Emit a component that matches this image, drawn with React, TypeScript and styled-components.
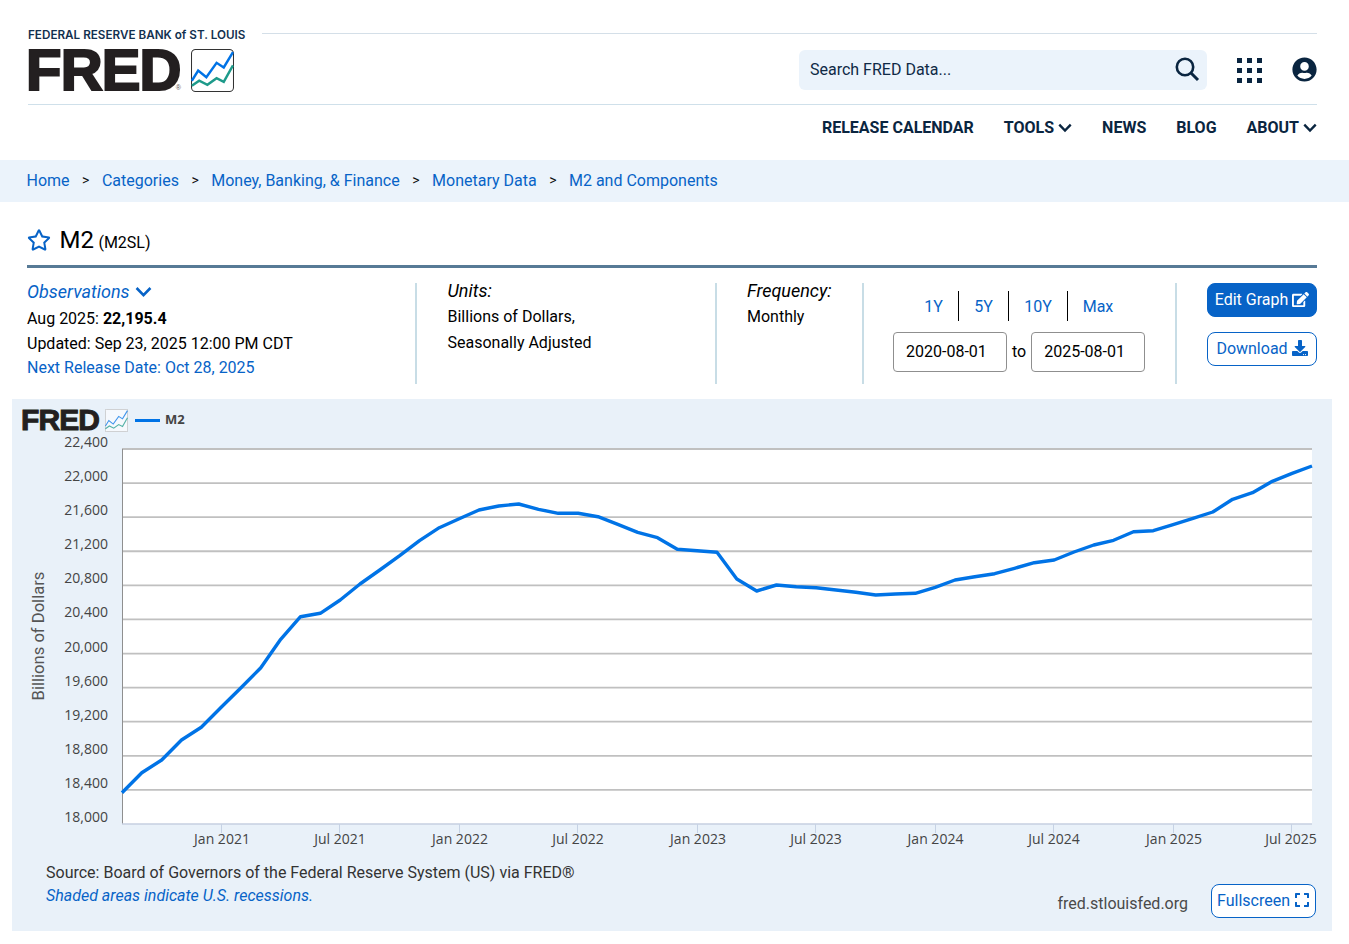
import React from "react";
import styled, { createGlobalStyle } from "styled-components";
import { FaEdit, FaDownload, FaExpand, FaRegStar, FaUserCircle } from "react-icons/fa";

const Global = createGlobalStyle`
  html, body { margin: 0; padding: 0; background: #fff; }
  body { font-family: Roboto, "Liberation Sans", sans-serif; font-size: 16px; color: #000; }
  * { box-sizing: border-box; }
`;

const Page = styled.div`width: 1349px; height: 944px; overflow: hidden;`;
const Header = styled.header`padding: 27px 32px 0 27px; height: 160px;`;
const TopRow = styled.div`display: flex; height: 78px; border-bottom: 1px solid #cfe0ea; margin-left: 1px;`;
const Brand = styled.div`width: 234px; flex: none;`;
const BankName = styled.div`font-family: Inter, Lato, sans-serif; font-size: 11.7px; font-weight: 600; color: #12304f; line-height: 14px; white-space: nowrap; padding-top: 1px; margin-bottom: 7px;`;
const LogoRow = styled.div`display: flex; align-items: flex-start; gap: 10px;`;
const LogoWord = styled.div`font-family: "Liberation Sans", sans-serif; font-weight: 700; color: #231f20; font-size: 58px; line-height: 42px; height: 42px; letter-spacing: -0.8px; -webkit-text-stroke: 2.2px #231f20; position: relative; width: 153px; white-space: nowrap; text-indent: -2px;`;
const Reg = styled.span`position: absolute; right: 0; bottom: 0; font-size: 7px; line-height: 7px; letter-spacing: 0; color: #555; -webkit-text-stroke: 0; font-weight: 400; text-indent: 0;`;
const TopRight = styled.div`flex: 1; display: flex; flex-direction: column;`;
const Rule = styled.div`height: 1px; background: #d4dfe8; margin-top: 6px;`;
const Tools = styled.div`display: flex; align-items: center; margin-top: 16px; justify-content: flex-end;`;
const Search = styled.div`width: 408px; height: 40px; background: #ebf3fb; border-radius: 6px; display: flex; align-items: center; justify-content: space-between; padding: 0 7px 2px 11px; font-size: 16px; color: #0f2a46;`;
const Grid3 = styled.svg`margin-left: 29px; display: block;`;
const Person = styled(FaUserCircle)`margin-left: 30px; display: block; margin-bottom: 2px; color: #0a2540; flex: none;`;
const Nav = styled.nav`display: flex; justify-content: flex-end; gap: 30px; margin-top: 13px; height: 20px;`;
const NavLink = styled.span`display: flex; align-items: center; gap: 4px; font-weight: 700; font-size: 16px; line-height: 20px; color: #0a2540; white-space: nowrap;`;
const Crumbs = styled.div`height: 42px; background: #ebf3fb; display: flex; align-items: center; padding: 0 0 2px 26.5px; font-size: 16px;`;
const Crumb = styled.a`color: #0763c7;`;
const Sep = styled.span`color: #111; margin: 0 12.5px; font-size: 14px;`;
const Main = styled.main`padding: 0 32px 0 27px;`;
const TitleRow = styled.div`display: flex; align-items: center; height: 66px; border-bottom: 3px solid #577a96; padding-top: 15px;`;
const Star = styled(FaRegStar)`color: #0763c7; margin-top: -2px; flex: none;`;
const Title = styled.h1`margin: 0 0 0 8.5px; font-weight: 400; font-size: 24px; line-height: 30px; color: #000;`;
const Code = styled.span`font-size: 16px; margin-left: -1.5px;`;
const Info = styled.section`display: flex; height: 131px; padding-top: 15px;`;
const Col = styled.div<{ $w: number }>`width: ${(p) => p.$w}px; flex: none; height: 101px;`;
const BorderCol = styled(Col)<{ $pad?: number }>`border-right: 2px solid #c8dde6; padding-left: ${(p) => p.$pad ?? 0}px;`;
const Line = styled.div`font-size: 16px; line-height: 25.5px; white-space: nowrap;`;
const ValueLine = styled(Line)`line-height: 25px;`;
const Italic = styled(Line)`font-style: italic; font-size: 18px; line-height: 16px; margin-bottom: 5px;`;
const BlueItalic = styled(Italic)`color: #0763c7; display: flex; align-items: center; gap: 5px; line-height: 18px; margin-bottom: 5px;`;
const Blue = styled(Line)`color: #0763c7; line-height: 22px;`;
const Ranges = styled.div`display: flex; margin: 8px 0 0 45px;`;
const Range = styled.span<{ $w: number; $last?: boolean }>`width: ${(p) => p.$w}px; height: 30px; display: flex; align-items: center; justify-content: center; color: #0763c7; font-size: 16px; border-right: ${(p) => (p.$last ? "0" : "1px solid #000")};`;
const Dates = styled.div`display: flex; align-items: center; gap: 5px; margin: 11px 0 0 29px; font-size: 16px;`;
const DateBox = styled.div`width: 114px; height: 40px; border: 1px solid #8f8f8f; border-radius: 4px; padding: 0 0 2px 12px; display: flex; align-items: center;`;
const To = styled.span`padding-bottom: 2px;`;
const RangeCol = styled(Col)`border-right: 2px solid #c8dde6;`;
const Actions = styled.div`display: flex; flex-direction: column; align-items: flex-end; gap: 15px; flex: 1;`;
const Btn = styled.div<{ $solid?: boolean }>`height: 34px; width: 110px; border-radius: 8px; display: flex; align-items: center; justify-content: center; gap: 4px; padding-bottom: 2px; font-size: 16px; border: 1px solid #0763c7; background: ${(p) => (p.$solid ? "#0763c7" : "#fff")}; color: ${(p) => (p.$solid ? "#fff" : "#0763c7")};`;
const Panel = styled.section`margin: 0 17px 0 12px; height: 532px; background: #e9f1f9; position: relative; display: flex; flex-direction: column;`;
const Legend = styled.div`display: flex; align-items: center; height: 32px; padding: 10px 0 0 9px;`;
const SmallWord = styled.div`font-family: "Liberation Sans", sans-serif; font-weight: 700; font-size: 30px; line-height: 22px; height: 22px; width: 84px; color: #231f20; -webkit-text-stroke: 1px #231f20; letter-spacing: -.9px; white-space: nowrap;`;
const Swatch = styled.div`width: 25px; height: 3px; background: #0073e6; margin: 0 5px 0 7px;`;
const LegendName = styled.span`font-family: "Open Sans", sans-serif; font-weight: 700; font-size: 13px; color: #444; padding-bottom: 2px;`;
const Chart = styled.svg`display: block; text { font-family: "Open Sans", sans-serif; font-size: 14px; fill: #444; }`;
const AxisTitle = styled.text`&& { font-family: Roboto, sans-serif; font-size: 16.6px; fill: #555; }`;
const Foot = styled.div`flex: 1; display: flex; justify-content: space-between; padding: 0 16px 0 34px; color: #333;`;
const Source = styled.div`font-size: 16px; line-height: 23px; padding-top: 5px;`;
const Recess = styled.div`font-style: italic; color: #0763c7;`;
const FootRight = styled.div`display: flex; align-items: flex-end; gap: 23px; padding-bottom: 13px;`;
const Site = styled.span`font-size: 16px; line-height: 20px; color: #4a4a4a; padding-bottom: 4px;`;
const FullBtn = styled(Btn)`width: 105px; background: #fff; color: #0763c7;`;

const Trend = ({ w, r, sw, faint }: { w: number; r: number; sw: number; faint?: boolean }) => (
  <svg width={w} height={w} viewBox="0 0 42 42" style={{ display: "block", flex: "none" }}>
    <rect x=".5" y=".5" width="41" height="41" rx={r} fill="#fff" fillOpacity={faint ? 0.6 : 1} stroke={faint ? "#bbb" : "#333"} strokeWidth={faint ? 1.5 : 1} />
    <path d="M.8 31 L7 21 L15 27.5 L25 13.5 L32 18 L41 3" fill="none" stroke="#0073e6" strokeWidth={sw} opacity={faint ? 0.75 : 1} />
    <path d="M.8 36 L8 31 L16 35 L25 28.5 L32 32 L41 16" fill="none" stroke="#1d9a8a" strokeWidth={sw} opacity={faint ? 0.75 : 1} />
  </svg>
);

const Chevron = ({ c, w = 14, sw = 2.2 }: { c: string; w?: number; sw?: number }) => (
  <svg width={w} height={w * 0.7} viewBox="0 0 13 9"><path d="M1.2 1.5 L6.5 7 L11.8 1.5" fill="none" stroke={c} strokeWidth={sw} /></svg>
);

const ys = [792.7,772.7,760,740,727.3,707.3,687.7,667.7,639.3,616.7,613.3,600,584,570,555.7,540.7,527.7,518.7,510,506,504,509.3,513.3,513.3,516.7,524.3,532.3,537.7,549.3,550.7,552.3,579,591,585,586.7,587.7,590,592.3,595,594,593.3,587.3,580,576.7,573.7,568.3,562.7,560,552,545,540.3,531.7,530.7,524.7,518.3,512,499.3,492.7,481.3,473.3,466];
const pts = ys.map((y, i) => `${(122 + i * 19.833).toFixed(1)},${y}`).join(" ");
const yLabels = ["22,400","22,000","21,600","21,200","20,800","20,400","20,000","19,600","19,200","18,800","18,400","18,000"];
const xLabels: [string, number, number][] = [["Jan 2021",221,222],["Jul 2021",339,340],["Jan 2022",459,460],["Jul 2022",577,578],["Jan 2023",697,698],["Jul 2023",815,816],["Jan 2024",935,935.5],["Jul 2024",1053,1054],["Jan 2025",1173,1174],["Jul 2025",1291,1291]];

export default function App() {
  return (
    <Page>
      <Global />
      <Header>
        <TopRow>
          <Brand>
            <BankName>FEDERAL RESERVE BANK of ST. LOUIS</BankName>
            <LogoRow>
              <LogoWord>FRED<Reg>®</Reg></LogoWord>
              <Trend w={43} r={4} sw={2.4} />
            </LogoRow>
          </Brand>
          <TopRight>
            <Rule />
            <Tools>
              <Search>
                <span>Search FRED Data...</span>
                <svg width="26" height="26" viewBox="0 0 26 26"><circle cx="11" cy="11" r="8.2" fill="none" stroke="#0a2540" strokeWidth="2.6" /><path d="M17 17 L24 24" stroke="#0a2540" strokeWidth="3" /></svg>
              </Search>
              <Grid3 width="26" height="26" viewBox="0 0 26 26" fill="#0a2540">
                {[1, 11, 21].flatMap((y) => [1, 11, 21].map((x) => <rect key={`${x}-${y}`} x={x} y={y} width="5" height="5" />))}
              </Grid3>
              <Person size={25} />
            </Tools>
          </TopRight>
        </TopRow>
        <Nav>
          <NavLink>RELEASE CALENDAR</NavLink>
          <NavLink>TOOLS <Chevron c="#0a2540" /></NavLink>
          <NavLink>NEWS</NavLink>
          <NavLink>BLOG</NavLink>
          <NavLink>ABOUT <Chevron c="#0a2540" /></NavLink>
        </Nav>
      </Header>
      <Crumbs>
        <Crumb>Home</Crumb><Sep>&gt;</Sep>
        <Crumb>Categories</Crumb><Sep>&gt;</Sep>
        <Crumb>Money, Banking, &amp; Finance</Crumb><Sep>&gt;</Sep>
        <Crumb>Monetary Data</Crumb><Sep>&gt;</Sep>
        <Crumb>M2 and Components</Crumb>
      </Crumbs>
      <Main>
        <TitleRow>
          <Star size={24} />
          <Title>M2 <Code>(M2SL)</Code></Title>
        </TitleRow>
        <Info>
          <BorderCol $w={390}>
            <BlueItalic>Observations <Chevron c="#0763c7" w={17} sw={2} /></BlueItalic>
            <ValueLine>Aug 2025: <b>22,195.4</b></ValueLine>
            <Line>Updated: Sep 23, 2025 12:00 PM CDT</Line>
            <Blue>Next Release Date: Oct 28, 2025</Blue>
          </BorderCol>
          <BorderCol $w={300} $pad={30.5}>
            <Italic>Units:</Italic>
            <Line>Billions of Dollars,</Line>
            <Line>Seasonally Adjusted</Line>
          </BorderCol>
          <BorderCol $w={147} $pad={30}>
            <Italic>Frequency:</Italic>
            <Line>Monthly</Line>
          </BorderCol>
          <RangeCol $w={313}>
            <Ranges>
              <Range $w={50}>1Y</Range>
              <Range $w={50}>5Y</Range>
              <Range $w={59}>10Y</Range>
              <Range $w={60} $last>Max</Range>
            </Ranges>
            <Dates>
              <DateBox>2020-08-01</DateBox>
              <To>to</To>
              <DateBox>2025-08-01</DateBox>
            </Dates>
          </RangeCol>
          <Actions>
            <Btn $solid>Edit Graph <FaEdit size={17} /></Btn>
            <Btn>Download <FaDownload size={16} /></Btn>
          </Actions>
        </Info>
      </Main>
      <Panel>
        <Legend>
          <SmallWord>FRED</SmallWord>
          <Trend w={23} r={2} sw={2} faint />
          <Swatch />
          <LegendName>M2</LegendName>
        </Legend>
        <Chart width="1320" height="425" viewBox="12 431 1320 425">
          <rect x="122" y="449" width="1190" height="375" fill="#fff" />
          {yLabels.map((l, i) => {
            const y = 449 + i * 34.09;
            return (
              <g key={l}>
                {i < 11 && <line x1="122" x2="1312" y1={y} y2={y} stroke="#c0c0c0" strokeWidth="1.8" />}
                <text x="108" y={y - 2} textAnchor="end">{l}</text>
              </g>
            );
          })}
          <line x1="122.5" x2="122.5" y1="449" y2="824" stroke="#8f8f8f" />
          <line x1="122" x2="1312" y1="824" y2="824" stroke="#c6cfe0" strokeWidth="1.6" />
          {xLabels.map(([l, x, tx]) => (
            <g key={l}>
              <line x1={x + 0.5} x2={x + 0.5} y1="824" y2="833" stroke="#c6d2e4" />
              <text x={tx} y="844" textAnchor="middle">{l}</text>
            </g>
          ))}
          <polyline points={pts} fill="none" stroke="#0073e6" strokeWidth="3.4" strokeLinejoin="round" />
          <AxisTitle transform="translate(44 636) rotate(-90)" textAnchor="middle">Billions of Dollars</AxisTitle>
        </Chart>
        <Foot>
          <Source>
            <div>Source: Board of Governors of the Federal Reserve System (US) via FRED®</div>
            <Recess>Shaded areas indicate U.S. recessions.</Recess>
          </Source>
          <FootRight>
            <Site>fred.stlouisfed.org</Site>
            <FullBtn>Fullscreen <FaExpand size={16} /></FullBtn>
          </FootRight>
        </Foot>
      </Panel>
    </Page>
  );
}
